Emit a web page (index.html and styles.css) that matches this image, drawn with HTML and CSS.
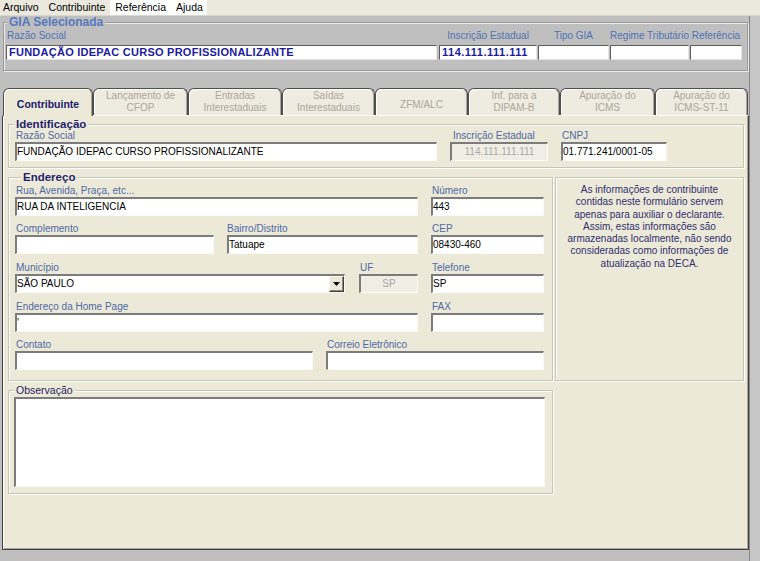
FILE: index.html
```html
<!DOCTYPE html>
<html lang="pt-BR">
<head>
<meta charset="utf-8">
<title>GIA - Contribuinte</title>
<link rel="stylesheet" href="styles.css">
</head>
<body>
<div class="menubar">
  <span class="mi">Arquivo</span>
  <span class="mi">Contribuinte</span>
  <span class="menu-hl"><span class="mi">Referência</span><span class="mi">Ajuda</span></span>
</div>
<div class="window">
  <div class="gia">
    <div class="legend">GIA Selecionada</div>
    <div class="gia-row">
      <div class="gf g-razao"><div class="glbl left">Razão Social</div><div class="ginp name">FUNDAÇÃO IDEPAC CURSO PROFISSIONALIZANTE</div></div>
      <div class="gf g-ie"><div class="glbl">Inscrição Estadual</div><div class="ginp digits">114.111.111.111</div></div>
      <div class="gf g-tipo"><div class="glbl">Tipo GIA</div><div class="ginp"></div></div>
      <div class="gf g-reg"><div class="glbl">Regime Tributário</div><div class="ginp"></div></div>
      <div class="gf g-ref"><div class="glbl">Referência</div><div class="ginp"></div></div>
    </div>
  </div>

  <div class="tabs">
    <div class="tab one active t1">Contribuinte</div>
    <div class="tab t2">Lançamento de<br>CFOP</div>
    <div class="tab t3">Entradas<br>Interestaduais</div>
    <div class="tab t4">Saídas<br>Interestaduais</div>
    <div class="tab one t5">ZFM/ALC</div>
    <div class="tab t6">Inf. para a<br>DIPAM-B</div>
    <div class="tab t7">Apuração do<br>ICMS</div>
    <div class="tab t8">Apuração do<br>ICMS-ST-11</div>
  </div>

  <div class="panel">
    <div class="grp ident">
      <div class="legend">Identificação</div>
      <div class="frow">
        <div class="fld w-irazao"><div class="lbl">Razão Social</div><div class="inp">FUNDAÇÃO IDEPAC CURSO PROFISSIONALIZANTE</div></div>
        <div class="fld w-iie"><div class="lbl lbl-ie">Inscrição Estadual</div><div class="inp dis">114.111.111.111</div></div>
        <div class="fld w-cnpj"><div class="lbl">CNPJ</div><div class="inp">01.771.241/0001-05</div></div>
      </div>
    </div>

    <div class="addr">
      <div class="grp endereco">
        <div class="legend">Endereço</div>
        <div class="frow r1">
          <div class="fld w-rua"><div class="lbl">Rua, Avenida, Praça, etc...</div><div class="inp">RUA DA INTELIGENCIA</div></div>
          <div class="fld w-c3"><div class="lbl">Número</div><div class="inp">443</div></div>
        </div>
        <div class="frow r2">
          <div class="fld w-compl"><div class="lbl">Complemento</div><div class="inp"></div></div>
          <div class="fld w-bairro"><div class="lbl lbl0">Bairro/Distrito</div><div class="inp">Tatuape</div></div>
          <div class="fld w-c3"><div class="lbl">CEP</div><div class="inp">08430-460</div></div>
        </div>
        <div class="frow r3">
          <div class="fld w-mun"><div class="lbl">Município</div>
            <div class="inp sel"><span class="val">SÃO PAULO</span><span class="dd"><svg width="7" height="4" viewBox="0 0 7 4"><path d="M0 0H7L3.5 4Z" fill="#000"/></svg></span></div>
          </div>
          <div class="fld w-uf"><div class="lbl">UF</div><div class="inp dis">SP</div></div>
          <div class="fld w-c3"><div class="lbl">Telefone</div><div class="inp">SP</div></div>
        </div>
        <div class="frow r4">
          <div class="fld w-rua"><div class="lbl">Endereço da Home Page</div><div class="inp">'</div></div>
          <div class="fld w-c3"><div class="lbl">FAX</div><div class="inp"></div></div>
        </div>
        <div class="frow r5">
          <div class="fld w-contato"><div class="lbl">Contato</div><div class="inp"></div></div>
          <div class="fld w-email"><div class="lbl">Correio Eletrônico</div><div class="inp"></div></div>
        </div>
      </div>
      <div class="grp info">As informações de contribuinte<br>contidas neste formulário servem<br>apenas para auxiliar o declarante.<br>Assim, estas informações são<br>armazenadas localmente, não sendo<br>consideradas como informações de<br>atualização na DECA.</div>
    </div>

    <div class="grp obs">
      <div class="legend">Observação</div>
      <div class="textarea"></div>
    </div>
  </div>
</div>
</body>
</html>
```
FILE: styles.css
```css
* { box-sizing: border-box; }
html, body { margin: 0; padding: 0; }
body {
  width: 760px;
  height: 561px;
  overflow: hidden;
  background: #c6c6c6;
  font-family: "Liberation Sans", Arial, Helvetica, sans-serif;
  font-size: 10px;
  color: #000;
}

/* menu */
.menubar {
  height: 16px;
  display: flex;
  gap: 10px;
  padding-left: 3px;
  background: #ebe8de;
  border-bottom: 1px solid #d9d7cf;
  font-size: 10.5px;
  line-height: 15px;
}
.menu-hl {
  display: flex;
  gap: 10px;
  margin-left: -5px;
  padding: 0 4px 0 5px;
  background: #fff;
}

/* window */
.window {
  width: 750px;
  height: 545px;
  background: #bfbfbf;
  border-right: 1px solid #858585;
  padding-top: 6px;
}

.legend {
  display: block;
  width: max-content;
  height: 12px;
  line-height: 12px;
  margin-top: -7px;
  padding: 0 2px;
  font-size: 11.5px;
  font-weight: bold;
  white-space: nowrap;
}

/* GIA selecionada */
.gia {
  margin-left: 3px;
  width: 745px;
  height: 49px;
  border: 1px solid #9a9a9a;
  box-shadow: inset 1px 1px 0 #ebebeb, 1px 1px 0 #ebebeb;
}
.gia .legend { margin-left: 3px; color: #5678be; background: #bfbfbf; font-size: 12px; }
.gia-row { display: flex; margin-top: 2px; }
.gf { display: flex; flex-direction: column; }
.glbl {
  height: 11px;
  line-height: 11px;
  margin-bottom: 4px;
  color: #4f72b8;
  text-align: center;
  white-space: nowrap;
}
.glbl.left { text-align: left; padding-left: 1px; }
.ginp {
  height: 15px;
  background: #fff;
  border-top: 1px solid #5c5c5c;
  border-left: 1px solid #5c5c5c;
  border-bottom: 1px solid #e4e4e4;
  border-right: 1px solid #e4e4e4;
  padding-left: 2px;
  font-size: 11px;
  font-weight: bold;
  line-height: 13px;
  color: #1b1b9e;
  white-space: nowrap;
  overflow: hidden;
}
.ginp.name { letter-spacing: 0.25px; }
.ginp.digits { letter-spacing: 0.5px; }
.g-razao { margin-left: 2px; width: 431px; }
.g-ie { margin-left: 2px; width: 98px; }
.g-tipo { margin-left: 1px; width: 71px; }
.g-reg { margin-left: 1px; width: 79px; }
.g-ref { margin-left: 1px; width: 52px; }

/* tabs */
.tabs {
  display: flex;
  align-items: flex-start;
  height: 27px;
  margin: 17px 0 0 3px;
}
.tab {
  height: 27px;
  border: 1px solid #4e4e4e;
  border-bottom: 0;
  border-radius: 6px 6px 0 0;
  background: #eeebe0;
  box-shadow: inset 1px 1px 0 #fff, inset -1px 0 0 #a9a699;
  color: #aca899;
  text-align: center;
  font-size: 10px;
  line-height: 11.5px;
  padding-top: 1px;
  white-space: nowrap;
}
.tab.one { padding-top: 10px; line-height: 11px; }
.tab.active {
  height: 28px;
  margin-bottom: -1px;
  position: relative;
  z-index: 1;
  background: #ece9d8;
  color: #1c1c6c;
  font-weight: bold;
  font-size: 10.5px;
}
.t1 { width: 90px; }
.t2 { width: 95px; }
.t3 { width: 94px; }
.t4 { width: 93px; }
.t5 { width: 93px; }
.t6 { width: 92px; }
.t7 { width: 95px; }
.t8 { width: 93px; }

/* panel */
.panel {
  margin-left: 2px;
  width: 747px;
  height: 435px;
  background: #ece9d8;
  border: 1px solid #404040;
  border-top: 1px solid #fbfaf6;
  box-shadow: inset 1px 0 0 #fff, inset -1px -1px 0 #aca899;
  padding-top: 8px;
}

.grp {
  border: 1px solid #c9c5b5;
  box-shadow: inset 1px 1px 0 #fff, 1px 1px 0 #fff;
}
.grp .legend { margin-left: 5px; color: #1f1f6f; background: #ece9d8; }

.ident { margin-left: 5px; width: 736px; height: 44px; }

.frow { display: flex; margin-left: 6px; }
.fld { display: flex; flex-direction: column; }
.lbl {
  height: 11px;
  line-height: 11px;
  margin-bottom: 1px;
  padding-left: 1px;
  color: #4c6aa6;
  white-space: nowrap;
}
.lbl-ie { padding-left: 3px; }
.lbl0 { padding-left: 0; }
.inp {
  height: 19px;
  background: #fff;
  border-top: 2px solid #7c7c7c;
  border-left: 2px solid #7c7c7c;
  border-bottom: 1px solid #fbfaf5;
  border-right: 1px solid #fbfaf5;
  font-size: 10px;
  line-height: 16px;
  white-space: nowrap;
  overflow: hidden;
}
.inp.dis {
  background: #efede4;
  color: #a8a8a8;
  text-align: center;
}

.w-irazao { width: 422px; }
.w-iie { margin-left: 13px; width: 98px; }
.w-cnpj { margin-left: 13px; width: 106px; }

/* endereço */
.addr { display: flex; gap: 2px; margin: 9px 0 0 5px; }
.endereco { width: 545px; height: 204px; }
.endereco .legend { margin-left: 12px; }
.r1 { margin-top: 2px; }
.r2 { margin-top: 7px; }
.r3 { margin-top: 8px; }
.r4 { margin-top: 8px; }
.r5 { margin-top: 7px; }
.w-rua { width: 403px; }
.w-c3 { margin-left: 13px; width: 113px; }
.w-compl { width: 199px; }
.w-bairro { margin-left: 13px; width: 191px; }
.w-mun { width: 330px; }
.w-uf { margin-left: 14px; width: 59px; }
.w-contato { width: 298px; }
.w-email { margin-left: 13px; width: 218px; }

.sel { display: flex; }
.sel .val { flex: 1; }
.dd {
  width: 15px;
  height: 16px;
  background: #ece9d8;
  border: 1px solid;
  border-color: #f6f5f0 #404040 #404040 #f6f5f0;
  box-shadow: inset -1px -1px 0 #8c8a80;
  display: flex;
  align-items: center;
  justify-content: center;
}
.dd svg { display: block; }

.info {
  width: 189px;
  height: 204px;
  padding-top: 6px;
  text-align: center;
  color: #2f2f70;
  line-height: 12.3px;
  white-space: nowrap;
}

/* observação */
.obs { margin: 9px 0 0 5px; width: 545px; height: 104px; }
.obs .legend {
  font-weight: normal;
  font-size: 10.5px;
  height: 11px;
  line-height: 11px;
  margin-top: -6px;
  color: #1f1f5f;
}
.textarea {
  margin: 1px 0 0 5px;
  width: 531px;
  height: 90px;
  background: #fff;
  border-top: 2px solid #7c7c7c;
  border-left: 2px solid #7c7c7c;
  border-right: 1px solid #fbfaf5;
  border-bottom: 1px solid #fbfaf5;
}
```
